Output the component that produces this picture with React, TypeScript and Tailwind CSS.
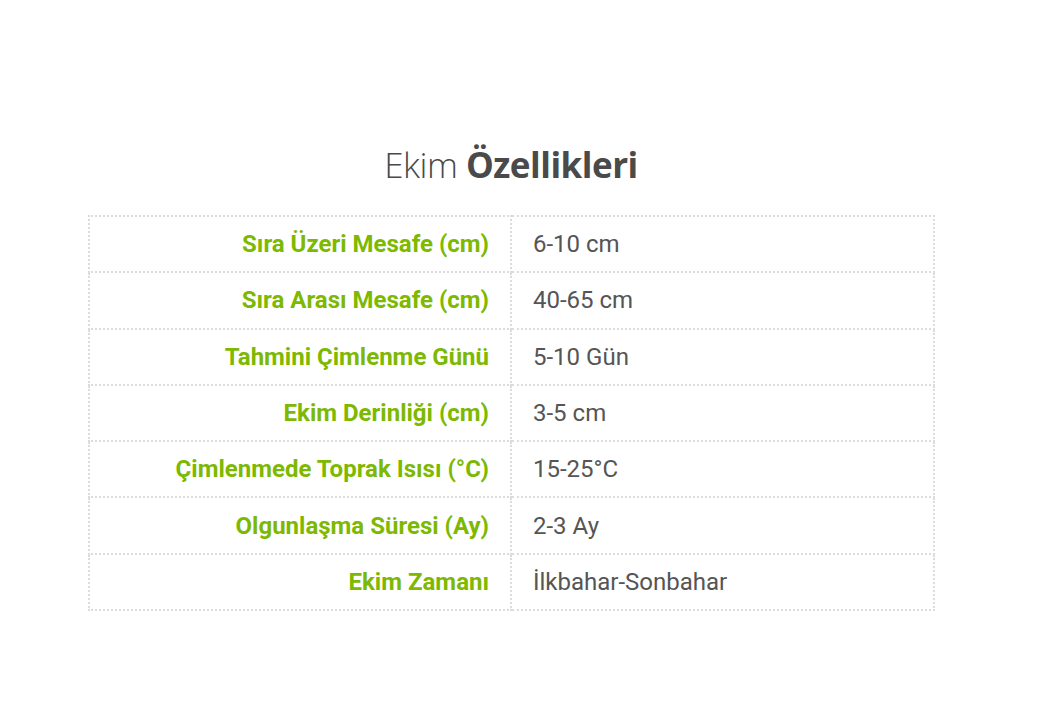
const rows = [
  { label: 'Sıra Üzeri Mesafe (cm)', value: '6-10 cm' },
  { label: 'Sıra Arası Mesafe (cm)', value: '40-65 cm' },
  { label: 'Tahmini Çimlenme Günü', value: '5-10 Gün' },
  { label: 'Ekim Derinliği (cm)', value: '3-5 cm' },
  { label: 'Çimlenmede Toprak Isısı (°C)', value: '15-25°C' },
  { label: 'Olgunlaşma Süresi (Ay)', value: '2-3 Ay' },
  { label: 'Ekim Zamanı', value: 'İlkbahar-Sonbahar' },
];

export default function App() {
  return (
    <div className="bg-white min-h-[725px] w-[1022px] flex flex-col items-center pt-[142px]">
      {/* title */}
      <h2
        className="text-[35px] leading-[46px] text-[#4a4a4a] tracking-[-0.5px]"
        style={{ fontFamily: '"Open Sans", sans-serif' }}
      >
        <span className="font-light">Ekim </span>
        <span className="font-bold">Özellikleri</span>
      </h2>

      {/* features table */}
      <table
        className="mt-[27px] w-[847px] border-collapse border-2 border-dotted border-[#dcdcdc] table-fixed"
        style={{ fontFamily: 'Roboto, sans-serif' }}
      >
        <tbody>
          {rows.map((r, i) => (
            <tr key={i} className="h-[56.3px]">
              <td className="w-1/2 border-2 border-dotted border-[#dcdcdc] pr-[21px] text-right text-[24px] font-bold text-[#7cb900]">
                {r.label}
              </td>
              <td className="w-1/2 border-2 border-dotted border-[#dcdcdc] pl-[21px] text-left text-[24px] text-[#555555]">
                {r.value}
              </td>
            </tr>
          ))}
        </tbody>
      </table>
    </div>
  );
}
